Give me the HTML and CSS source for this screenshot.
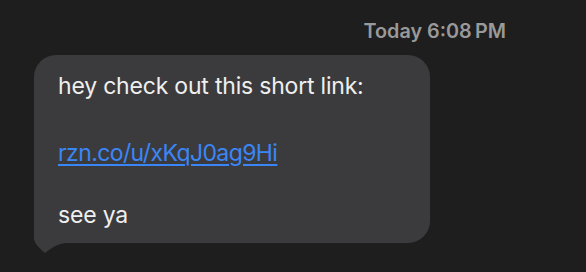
FILE: index.html
```html
<!DOCTYPE html>
<html lang="en">
<head>
    <meta charset="UTF-8">
    <meta name="viewport" content="width=device-width, initial-scale=1.0">
    <title>Messages</title>
    <link rel="stylesheet" href="styles.css">
</head>
<body>
    <div class="thread">
        <div class="stamp">Today 6:08&#8239;PM</div>

        <div class="row">
            <div class="bubble">
                <p class="line">hey check out this short link:</p>
                <p class="line link-line"><a href="#" class="link">rzn.co/u/xKqJ0ag9Hi</a></p>
                <p class="line">see ya</p>
            </div>
            <!-- tail of the bubble, tucked under its bottom-left corner -->
            <svg class="tail" width="36" height="24" viewBox="0 0 36 24">
                <path d="M0 0 L0 8 C0 13 6 19 11 23 C15 20 22 14 32 13 L36 13 L36 0 Z" fill="#3b3b3d"/>
            </svg>
        </div>
    </div>
</body>
</html>
```

FILE: styles.css
```css
body { margin: 0; background: #1e1e1e; font-family: Inter, "Noto Sans", sans-serif; }

.thread {
    padding-top: 19px;
}

.stamp {
    text-align: right;
    padding-right: 80px;
    font-size: 19.8px;
    font-weight: 600;
    line-height: 24px;
    color: #999999;
    margin-bottom: 12px;
}

.row {
    padding-left: 34px;
}

.bubble {
    width: 396px;
    box-sizing: border-box;
    padding: 16px 24px 13px;
    background: #3b3b3d;
    border-radius: 22px 22px 22px 12px;
    color: #efefef;
    font-size: 23px;
    line-height: 30px;
    letter-spacing: -0.2px;
}

.line { margin: 0; }
.line:first-child { margin-bottom: 37px; }
.link-line { margin-bottom: 32px; }

.link {
    color: #3b86f7;
    letter-spacing: -0.6px;
    text-decoration: underline;
    text-decoration-thickness: 1.5px;
    text-underline-offset: 3px;
}

.tail {
    display: block;
    margin-top: -13px;
}
```
